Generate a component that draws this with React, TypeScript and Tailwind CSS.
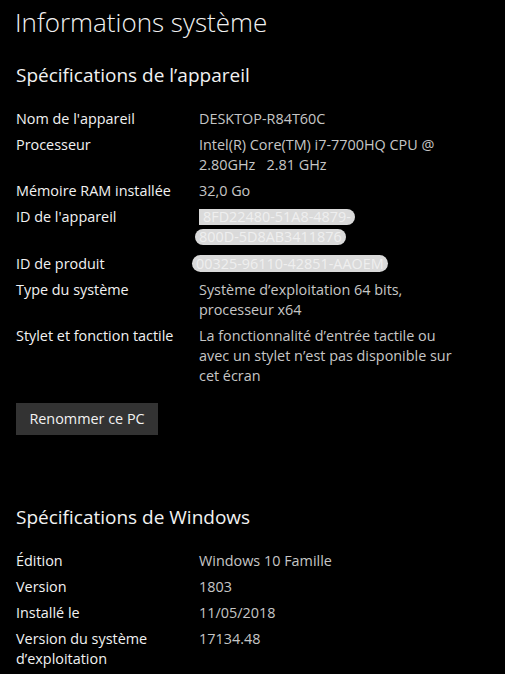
const font = { fontFamily: '"Open Sans", "Noto Sans", sans-serif' };

type Row = { label: React.ReactNode; value: React.ReactNode; lead?: string };

function Pill({ children, className = "" }: { children: React.ReactNode; className?: string }) {
  return (
    <span
      className={`inline-block rounded-full bg-[#dadada] px-[4px] text-[#efefef] leading-[16px] ${className}`}
    >
      {children}
    </span>
  );
}

function InfoRows({ rows }: { rows: Row[] }) {
  return (
    <div className="flex flex-col gap-[6px]">
      {rows.map((row, i) => (
        <div key={i} className="flex text-[14.4px] leading-[20px]">
          <div className="w-[183px] shrink-0 text-[#f2f2f2]">{row.label}</div>
          <div className={`whitespace-pre text-[#c6c6c6] ${row.lead ?? ""}`}>{row.value}</div>
        </div>
      ))}
    </div>
  );
}

export default function App() {
  const device: Row[] = [
    { label: "Nom de l'appareil", value: "DESKTOP-R84T60C" },
    {
      label: "Processeur",
      value: (
        <>
          Intel(R) Core(TM) i7-7700HQ CPU @
          <br />
          2.80GHz   2.81 GHz
        </>
      ),
    },
    { label: "Mémoire RAM installée", value: "32,0 Go" },
    {
      label: "ID de l'appareil",
      lead: "pb-px",
      value: (
        <>
          <Pill className="rounded-l-none">8FD22480-51A8-4879-</Pill>
          <br />
          <Pill className="-ml-[4px]">800D-5D8AB3411876</Pill>
        </>
      ),
    },
    {
      label: "ID de produit",
      value: <Pill className="-ml-[7px] leading-[17px]">00325-96110-42851-AAOEM</Pill>,
    },
    {
      label: "Type du système",
      value: (
        <>
          Système d’exploitation 64 bits,
          <br />
          processeur x64
        </>
      ),
    },
    {
      label: "Stylet et fonction tactile",
      value: (
        <>
          La fonctionnalité d’entrée tactile ou
          <br />
          avec un stylet n’est pas disponible sur
          <br />
          cet écran
        </>
      ),
    },
  ];

  const windows: Row[] = [
    { label: "Édition", value: "Windows 10 Famille" },
    { label: "Version", value: "1803" },
    { label: "Installé le", value: "11/05/2018" },
    {
      label: (
        <>
          Version du système
          <br />
          d’exploitation
        </>
      ),
      value: "17134.48",
    },
  ];

  return (
    <div className="min-h-[674px] w-full bg-black pl-4 pt-[3px] text-white" style={font}>
      <h1 className="-ml-px text-[26px] font-light leading-[38px] text-[#f2f2f2]">Informations système</h1>

      <h2 className="mt-[20px] text-[19px] leading-[28px] text-[#f2f2f2]">Spécifications de l’appareil</h2>
      <div className="mt-[20px]">
        <InfoRows rows={device} />
      </div>

      <button className="mt-[17px] h-[32px] w-[142px] bg-[#333333] text-[14.4px] text-[#f2f2f2]">
        Renommer ce PC
      </button>

      <h2 className="mt-[68px] text-[19px] leading-[28px] text-[#f2f2f2]">Spécifications de Windows</h2>
      <div className="mt-[20px]">
        <InfoRows rows={windows} />
      </div>
    </div>
  );
}
